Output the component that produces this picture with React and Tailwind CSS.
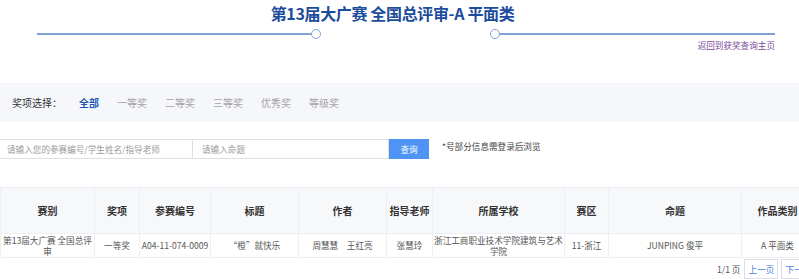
export default function App() {
  const cols = [94, 45, 71, 88, 88, 46, 132, 44, 133, 72];
  const heads = ["赛别", "奖项", "参赛编号", "标题", "作者", "指导老师", "所属学校", "赛区", "命题", "作品类别"];
  const row = [
    "第13届大广赛 全国总评审",
    "一等奖",
    "A04-11-074-0009",
    "“橙”就快乐",
    "周慧慧　王红亮",
    "张慧玲",
    "浙江工商职业技术学院建筑与艺术学院",
    "11-浙江",
    "JUNPING 俊平",
    "A 平面类",
  ];
  return (
    <div className="w-[799px] h-[279px] overflow-hidden bg-white text-[#333]" style={{ fontFamily: '"Noto Sans CJK SC", "Liberation Sans", sans-serif' }}>
      <div className="w-[830px]">
        <div className="w-[799px]">
          <div className="pt-[1px] h-[22px] text-center">
            <span className="text-[16px] leading-[20px] font-bold tracking-[-0.35px] text-[#1c4c9c] relative left-[-7px]">第13届大广赛 全国总评审-A 平面类</span>
          </div>
          <div className="mt-[7px] flex items-center h-[10px] pl-[37px] pr-[24px]">
            <div className="w-[274px] h-[2px] bg-[#7fa2d2]" />
            <div className="w-[10px] h-[10px] rounded-full border-[1.5px] border-[#7fa2d2] bg-white" />
            <div className="flex-1" />
            <div className="w-[10px] h-[10px] rounded-full border-[1.5px] border-[#7fa2d2] bg-white" />
            <div className="w-[275px] h-[2px] bg-[#7fa2d2]" />
          </div>
          <div className="pr-[24px] text-right h-[12px] text-[8.6px] leading-[12px] text-[#7a4a98]">返回到获奖查询主页</div>
        </div>
        <div className="mt-[32px] h-[39px] bg-[#f6f7fa] flex items-center text-[10px] w-[799px]">
          <span className="ml-[12px] text-[#333]">奖项选择：</span>
          <span className="ml-[17px] text-[#1f56b5] font-bold">全部</span>
          <span className="ml-[18px] text-[#a3a3a3]">一等奖</span>
          <span className="ml-[18px] text-[#a3a3a3]">二等奖</span>
          <span className="ml-[18px] text-[#a3a3a3]">三等奖</span>
          <span className="ml-[18px] text-[#a3a3a3]">优秀奖</span>
          <span className="ml-[18px] text-[#a3a3a3]">等级奖</span>
        </div>
        <div className="mt-[17px] flex items-start h-[20px]">
          <div className="w-[194px] h-[20px] border border-[#dcdfe6] -ml-px pl-[7px] flex items-center text-[8.6px] text-[#9a9a9a]">请输入您的参赛编号/学生姓名/指导老师</div>
          <div className="w-[196px] h-[20px] border border-[#dcdfe6] border-l-0 pl-[9px] flex items-center text-[8.6px] text-[#9a9a9a]">请输入命题</div>
          <div className="w-[40px] h-[20px] bg-[#4f94f5] text-white text-[8.6px] flex items-center justify-center">查询</div>
          <div className="ml-[13px] mt-[1px] text-[8.6px] leading-[12px] text-[#444]">*号部分信息需登录后浏览</div>
        </div>
        <table className="mt-[28px] table-fixed border-collapse w-[813px]">
          <colgroup>
            {cols.map((w, i) => (
              <col key={i} style={{ width: w }} />
            ))}
          </colgroup>
          <thead>
            <tr>
              {heads.map((h, i) => (
                <th key={i} className="h-[46px] bg-[#f7f8fa] border border-[#ebeef3] text-[10px] font-bold text-[#333] text-center align-middle p-0">{h}</th>
              ))}
            </tr>
          </thead>
          <tbody>
            <tr>
              {row.map((c, i) => (
                <td key={i} className="h-[24px] border border-[#ebeef3] text-[8.6px] leading-[11px] text-[#555] text-center align-middle p-0">{c}</td>
              ))}
            </tr>
          </tbody>
        </table>
        <div className="mt-[1px] flex items-center h-[20px]">
          <span className="ml-[717px] text-[8.6px] text-[#555]">1/1 页</span>
          <div className="ml-[4px] w-[34px] h-[20px] border border-[#dcdfe6] flex items-center justify-center text-[8.6px] text-[#4a80d6]">上一页</div>
          <div className="ml-[3px] w-[34px] h-[20px] border border-[#dcdfe6] flex items-center justify-center text-[8.6px] text-[#4a80d6]">下一页</div>
        </div>
      </div>
    </div>
  );
}
